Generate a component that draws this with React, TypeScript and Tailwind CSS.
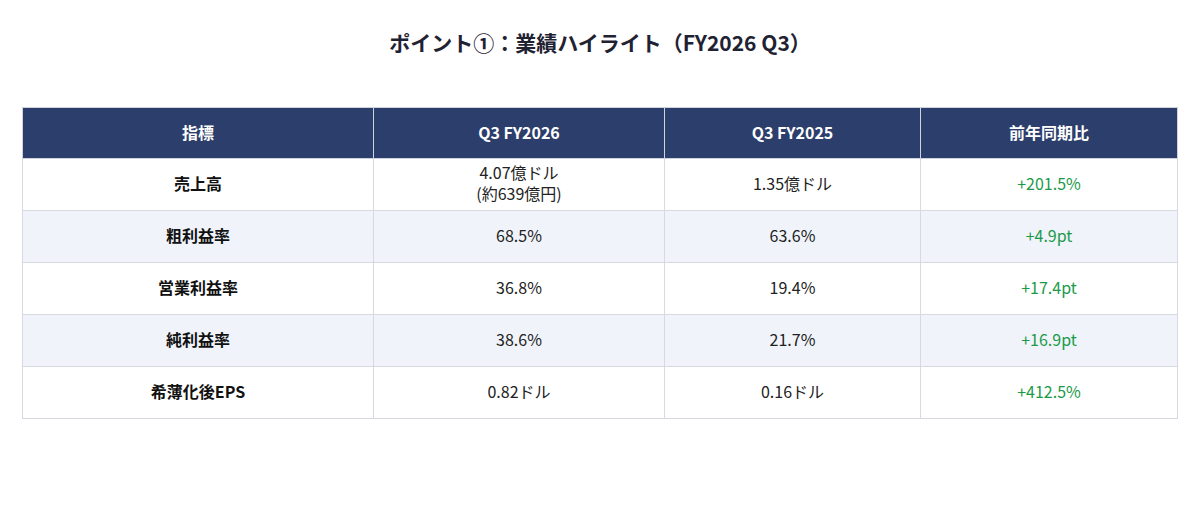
import React from "react";

// ─── Data ────────────────────────────────────────────────────────────────

const ROWS = [
  { label: "売上高", cur: ["4.07億ドル", "(約639億円)"], prev: "1.35億ドル", yoy: "+201.5%" },
  { label: "粗利益率", cur: ["68.5%"], prev: "63.6%", yoy: "+4.9pt" },
  { label: "営業利益率", cur: ["36.8%"], prev: "19.4%", yoy: "+17.4pt" },
  { label: "純利益率", cur: ["38.6%"], prev: "21.7%", yoy: "+16.9pt" },
  { label: "希薄化後EPS", cur: ["0.82ドル"], prev: "0.16ドル", yoy: "+412.5%" },
];

export default function App() {
  return (
    <div
      className="w-[1200px] h-[525px] bg-white px-[22px] pt-[28px] text-[#1f2233]"
      style={{ fontFamily: '"Noto Sans CJK JP", "Noto Sans", sans-serif' }}
    >
      <h1 className="text-center text-[21px] leading-[28px] font-bold mb-[51px]">
        ポイント①：業績ハイライト（FY2026 Q3）
      </h1>

      <table className="w-[1155px] table-fixed border-collapse text-[16px] leading-[20px]">
        <colgroup>
          <col className="w-[351px]" />
          <col className="w-[291px]" />
          <col className="w-[256px]" />
          <col className="w-[257px]" />
        </colgroup>
        <thead>
          <tr className="bg-[#2c3e6b] text-white h-[51px]">
            {["指標", "Q3 FY2026", "Q3 FY2025", "前年同期比"].map((h) => (
              <th key={h} className="border border-[#cfd4dc] font-bold text-center align-middle pb-[2px]">
                {h}
              </th>
            ))}
          </tr>
        </thead>
        <tbody>
          {ROWS.map((r, i) => (
            <tr key={r.label} className={`h-[52px] ${i % 2 === 1 ? "bg-[#f0f4fa]" : "bg-white"}`}>
              <td className="border border-[#d6dae0] text-center font-bold text-[#111] pb-[3px]">{r.label}</td>
              <td className="border border-[#d6dae0] text-center text-[#222] pb-[3px]">
                {r.cur.map((t) => (
                  <div key={t} className="leading-[21px]">
                    {t}
                  </div>
                ))}
              </td>
              <td className="border border-[#d6dae0] text-center text-[#222] pb-[3px]">{r.prev}</td>
              <td className="border border-[#d6dae0] text-center text-[#1a9a48] pb-[3px]">{r.yoy}</td>
            </tr>
          ))}
        </tbody>
      </table>
    </div>
  );
}
